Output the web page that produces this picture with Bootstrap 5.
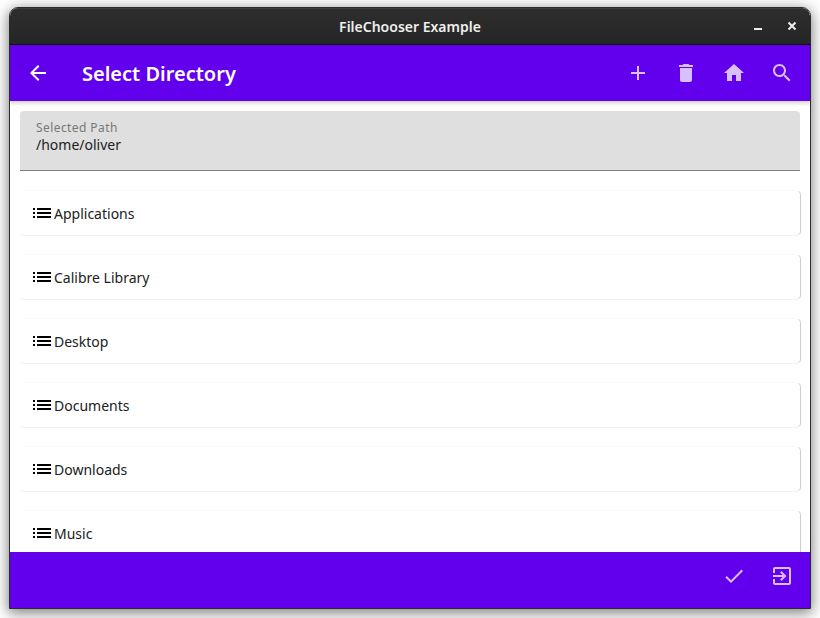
<!DOCTYPE html>
<html lang="en">
<head>
<meta charset="utf-8">
<meta name="viewport" content="width=device-width, initial-scale=1">
<title>FileChooser Example</title>
<link href="https://cdn.jsdelivr.net/npm/bootstrap@5.3.0/dist/css/bootstrap.min.css" rel="stylesheet">
<style>
  body { font-family: "Noto Sans", sans-serif; font-size: 14px; line-height: 20px; color: #212121; background: #fff; padding: 7px 9px 9px; }
  .app-window { border: 1px solid #2b2b2b; border-radius: 9px 9px 0 0; background: #fff; box-shadow: 0 3px 14px 1px rgba(0,0,0,.5); }
  .title-bar { height: 37px; padding: 0 5px; background: linear-gradient(#2e2e2e, #252525); border-bottom: 1px solid #070707; border-radius: 8px 8px 0 0; color: #eeeeec; display: grid; grid-template-columns: 1fr auto 1fr; box-shadow: inset 0 1px #3d3d3d; }
  .title-bar h1 { font-size: 14px; line-height: 20px; font-weight: 600; padding-top: 2px; }
  .win-btn { width: 24px; height: 24px; }
  .app-bar, .action-bar { height: 56px; background: #6200ee; color: #fff; }
  .app-bar { padding: 0 4px; box-shadow: 0 2px 4px rgba(0,0,0,.2); z-index: 1; }
  .app-bar h2 { font-size: 20px; line-height: 28px; font-weight: 600; margin-left: 20px; padding-top: 2px; }
  .action-bar { padding: 0 4px; z-index: 1; }
  .icon-btn { width: 48px; height: 48px; color: #fff; }
  .icon-btn.soft { color: #d8bfff; }
  .btn svg { display: block; fill: currentColor; }
  .content { min-height: 0; padding: 10px; gap: 20px; }
  .path-field { height: 60px; padding: 8px 16px; background: #dfdfdf; border-bottom: 1px solid #808080; border-radius: 4px 4px 0 0; }
  .path-field label { font-size: 12px; line-height: 17px; letter-spacing: .035em; color: #787878; }
  .path-field input { line-height: 18px; color: #212121; background: transparent; outline: 0; }
  .dir-list { gap: 20px; }
  .dir-item, .dir-item:hover { --bs-btn-border-width: 0; height: 44px; padding: 0 10px; font-size: 14px; line-height: 20px; color: #212121; background: #fff; border-radius: 4px; box-shadow: 1px 0 1px rgba(0,0,0,.2), 0 1px 1px rgba(0,0,0,.04); }
  .dir-item svg { fill: #000; }
  .dir-item span { padding-top: 2px; }
</style>
</head>
<body class="vh-100 overflow-hidden">
<div class="app-window h-100 d-flex flex-column overflow-hidden">
  <header class="title-bar align-items-center flex-shrink-0">
    <span></span>
    <h1 class="m-0">FileChooser Example</h1>
    <div class="d-flex justify-content-end">
      <button type="button" class="btn win-btn border-0 p-0 text-reset me-2" aria-label="Minimize"><svg width="24" height="24" viewBox="0 0 24 24"><path d="M5 14h8v2H5z"/></svg></button>
      <button type="button" class="btn win-btn border-0 p-0 text-reset" aria-label="Close"><svg width="24" height="24" viewBox="0 0 24 24"><path d="M7.5 8.5 14.5 15.5M14.5 8.5 7.5 15.5" stroke="currentColor" stroke-width="2"/></svg></button>
    </div>
  </header>
  <nav class="app-bar position-relative d-flex align-items-center flex-shrink-0" aria-label="Directory tools">
    <button type="button" class="btn icon-btn border-0 p-0 d-flex align-items-center justify-content-center" aria-label="Back"><svg width="24" height="24" viewBox="0 0 24 24"><path d="M20 11H7.83l5.59-5.59L12 4l-8 8 8 8 1.41-1.41L7.83 13H20z"/></svg></button>
    <h2 class="mb-0 me-auto">Select Directory</h2>
    <button type="button" class="btn icon-btn soft border-0 p-0 d-flex align-items-center justify-content-center" aria-label="New folder"><svg width="24" height="24" viewBox="0 0 24 24"><path d="M19 13h-6v6h-2v-6H5v-2h6V5h2v6h6z"/></svg></button>
    <button type="button" class="btn icon-btn soft border-0 p-0 d-flex align-items-center justify-content-center" aria-label="Delete"><svg width="24" height="24" viewBox="0 0 24 24"><path d="M6 19c0 1.1.9 2 2 2h8c1.1 0 2-.9 2-2V7H6zM19 4h-3.5l-1-1h-5l-1 1H5v2h14z"/></svg></button>
    <button type="button" class="btn icon-btn soft border-0 p-0 d-flex align-items-center justify-content-center" aria-label="Home"><svg width="24" height="24" viewBox="0 0 24 24"><path d="M10 20v-6h4v6h5v-8h3L12 3 2 12h3v8z"/></svg></button>
    <button type="button" class="btn icon-btn soft border-0 p-0 d-flex align-items-center justify-content-center" aria-label="Search"><svg width="24" height="24" viewBox="0 0 24 24"><path d="M15.5 14h-.79l-.28-.27C15.41 12.59 16 11.11 16 9.5 16 5.91 13.09 3 9.5 3S3 5.91 3 9.5 5.91 16 9.5 16c1.61 0 3.09-.59 4.23-1.57l.27.28v.79l5 4.99L20.49 19zm-6 0C7.01 14 5 11.99 5 9.5S7.01 5 9.5 5 14 7.01 14 9.5 11.99 14 9.5 14z"/></svg></button>
  </nav>
  <main class="content flex-grow-1 d-flex flex-column overflow-hidden">
    <div class="path-field flex-shrink-0 d-flex flex-column">
      <label for="path">Selected Path</label>
      <input id="path" type="text" class="border-0 p-0 w-100" value="/home/oliver">
    </div>
    <div class="dir-list d-flex flex-column flex-shrink-0">
      <button type="button" class="btn dir-item d-flex align-items-center text-start"><svg width="24" height="24" viewBox="0 0 24 24"><path d="M3 7h2v2H3zm0 4h2v2H3zm0 4h2v2H3zM7 7h14v2H7zm0 4h14v2H7zm0 4h14v2H7z"/></svg><span>Applications</span></button>
      <button type="button" class="btn dir-item d-flex align-items-center text-start"><svg width="24" height="24" viewBox="0 0 24 24"><path d="M3 7h2v2H3zm0 4h2v2H3zm0 4h2v2H3zM7 7h14v2H7zm0 4h14v2H7zm0 4h14v2H7z"/></svg><span>Calibre Library</span></button>
      <button type="button" class="btn dir-item d-flex align-items-center text-start"><svg width="24" height="24" viewBox="0 0 24 24"><path d="M3 7h2v2H3zm0 4h2v2H3zm0 4h2v2H3zM7 7h14v2H7zm0 4h14v2H7zm0 4h14v2H7z"/></svg><span>Desktop</span></button>
      <button type="button" class="btn dir-item d-flex align-items-center text-start"><svg width="24" height="24" viewBox="0 0 24 24"><path d="M3 7h2v2H3zm0 4h2v2H3zm0 4h2v2H3zM7 7h14v2H7zm0 4h14v2H7zm0 4h14v2H7z"/></svg><span>Documents</span></button>
      <button type="button" class="btn dir-item d-flex align-items-center text-start"><svg width="24" height="24" viewBox="0 0 24 24"><path d="M3 7h2v2H3zm0 4h2v2H3zm0 4h2v2H3zM7 7h14v2H7zm0 4h14v2H7zm0 4h14v2H7z"/></svg><span>Downloads</span></button>
      <button type="button" class="btn dir-item d-flex align-items-center text-start"><svg width="24" height="24" viewBox="0 0 24 24"><path d="M3 7h2v2H3zm0 4h2v2H3zm0 4h2v2H3zM7 7h14v2H7zm0 4h14v2H7zm0 4h14v2H7z"/></svg><span>Music</span></button>
    </div>
  </main>
  <footer class="action-bar d-flex justify-content-end flex-shrink-0">
    <button type="button" class="btn icon-btn soft border-0 p-0 d-flex align-items-center justify-content-center" aria-label="Confirm"><svg width="24" height="24" viewBox="0 0 24 24"><path d="M9 16.17 4.83 12l-1.42 1.41L9 19 21 7l-1.41-1.41z"/></svg></button>
    <button type="button" class="btn icon-btn soft border-0 p-0 d-flex align-items-center justify-content-center" aria-label="Exit"><svg width="24" height="24" viewBox="0 0 24 24"><path d="M10.09 15.59 11.5 17l5-5-5-5-1.41 1.41L12.67 11H3v2h9.67zM19 3H5c-1.11 0-2 .9-2 2v4h2V5h14v14H5v-4H3v4c0 1.1.89 2 2 2h14c1.1 0 2-.9 2-2V5c0-1.1-.9-2-2-2z"/></svg></button>
  </footer>
</div>
</body>
</html>
